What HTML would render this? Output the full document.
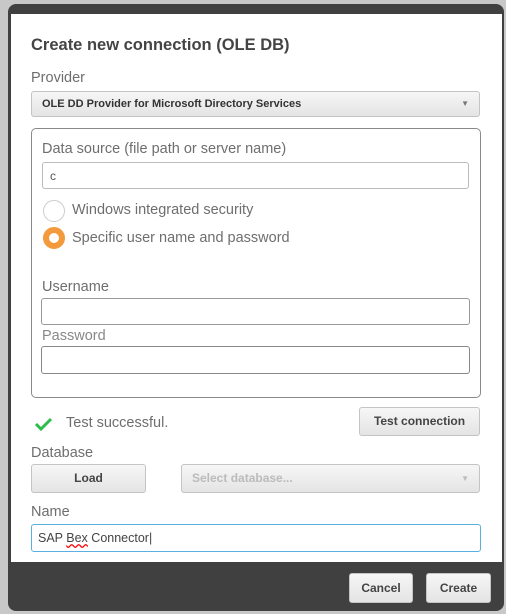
<!DOCTYPE html>
<html><head><style>
*{box-sizing:border-box;margin:0;padding:0}
body{width:506px;height:614px;background:#c8c8c8;position:relative;overflow:hidden;font-family:"Liberation Sans",sans-serif;color:#666}
.a{position:absolute}
#frame{left:8px;top:4px;width:496px;height:607px;background:#404040;border-radius:8px}
#white{left:11px;top:14px;width:491px;height:548px;background:#fff}
.lbl{font-size:14.5px;color:#6e6e6e}
.inp{border:1px solid #bbb;border-radius:3px;background:#fff}
.btn{background:linear-gradient(#f6f6f6,#e4e4e4);border:1px solid #c4c4c4;border-radius:3px;font-size:12px;font-weight:bold;color:#444;text-align:center}
</style></head><body>
<div class="a" id="frame"></div>
<div class="a" id="white"></div>
<div class="a" style="left:31px;top:36px;font-size:16.5px;font-weight:bold;color:#444">Create new connection (OLE DB)</div>
<div class="a lbl" style="left:31px;top:70px">Provider</div>
<div class="a btn" style="left:31px;top:91px;width:449px;height:26px;text-align:left;padding:6px 10px;font-size:11px;color:#333">OLE DD Provider for Microsoft Directory Services<span style="position:absolute;right:10px;top:7px;font-size:8px;color:#777">▼</span></div>
<div class="a" style="left:31px;top:128px;width:450px;height:270px;border:1px solid #8a8a8a;border-radius:5px"></div>
<div class="a lbl" style="left:42px;top:141px">Data source (file path or server name)</div>
<div class="a inp" style="left:42px;top:162px;width:427px;height:27px;font-size:12px;padding:6px 7px;color:#555">c</div>
<div class="a" style="left:43px;top:200px;width:22px;height:22px;border:1px solid #ccc;border-radius:50%"></div>
<div class="a lbl" style="left:72px;top:202px">Windows integrated security</div>
<div class="a" style="left:43px;top:227px;width:22px;height:22px;border:6px solid #f39a3c;border-radius:50%;background:#fff"></div>
<div class="a lbl" style="left:72px;top:230px">Specific user name and password</div>
<div class="a lbl" style="left:42px;top:279px">Username</div>
<div class="a inp" style="left:41px;top:298px;width:429px;height:27px;border-color:#999"></div>
<div class="a lbl" style="left:42px;top:328px;color:#888">Password</div>
<div class="a inp" style="left:41px;top:346px;width:429px;height:28px;border-color:#888"></div>
<svg class="a" style="left:34px;top:416px" width="20" height="16"><path d="M2 8l5 5L17 3" stroke="#2bbf4a" stroke-width="3" fill="none"/></svg>
<div class="a lbl" style="left:66px;top:415px">Test successful.</div>
<div class="a btn" style="left:359px;top:407px;width:121px;height:29px;line-height:27px">Test connection</div>
<div class="a lbl" style="left:31px;top:445px">Database</div>
<div class="a btn" style="left:31px;top:464px;width:115px;height:29px;line-height:27px">Load</div>
<div class="a btn" style="left:181px;top:464px;width:299px;height:29px;line-height:27px;text-align:left;padding-left:10px;color:#bbb">Select database...<span style="position:absolute;right:10px;font-size:8px;color:#bbb">▼</span></div>
<div class="a lbl" style="left:31px;top:504px">Name</div>
<div class="a" style="left:31px;top:524px;width:450px;height:28px;border:1px solid #5ab0e0;border-radius:3px;font-size:12.5px;color:#444;padding:6px 6px">SAP <span style="text-decoration:underline wavy red">Bex</span> Connector|</div>
<div class="a btn" style="left:349px;top:573px;width:64px;height:30px;line-height:28px">Cancel</div>
<div class="a btn" style="left:426px;top:573px;width:65px;height:30px;line-height:28px">Create</div>
</body></html>
